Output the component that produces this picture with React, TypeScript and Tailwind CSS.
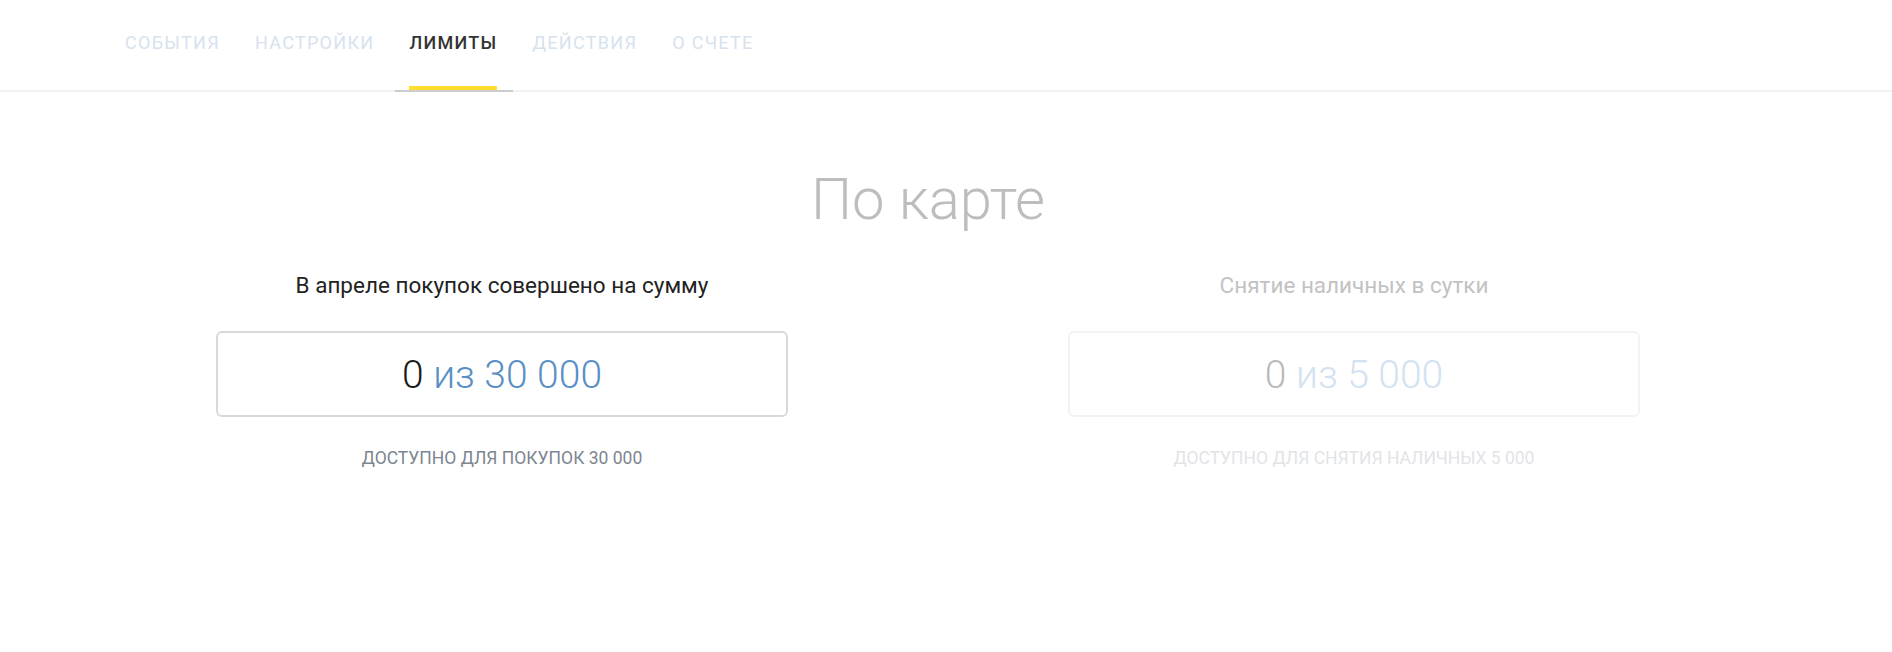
import React, { useState } from 'react';

const tabs = ['События', 'Настройки', 'Лимиты', 'Действия', 'О счете'];

type Limit = {
  title: string;
  spent: string;
  total: string;
  note: string;
  enabled: boolean;
};

const limits: Limit[] = [
  {
    title: 'В апреле покупок совершено на сумму',
    spent: '0',
    total: 'из 30 000',
    note: 'Доступно для покупок 30 000',
    enabled: true,
  },
  {
    title: 'Снятие наличных в сутки',
    spent: '0',
    total: 'из 5 000',
    note: 'Доступно для снятия наличных 5 000',
    enabled: false,
  },
];

const LimitCard = ({ limit }: { limit: Limit }) => (
  <div className="flex flex-col items-center w-[852px]">
    <h3
      className={`text-[22.5px] leading-6 ${
        limit.enabled ? 'text-[#222222]' : 'text-[#c2c2c2]'
      }`}
    >
      {limit.title}
    </h3>

    <div
      className={`mt-[34px] w-[572px] h-[86px] rounded-[6px] border-2 flex items-center justify-center pt-[2px] ${
        limit.enabled ? 'border-[#d9d9d9]' : 'border-[#f3f3f3]'
      }`}
    >
      <span className="text-[39px] leading-none font-light">
        <span className={limit.enabled ? 'text-[#1a1a1a]' : 'text-[#bababa]'}>
          {limit.spent}
        </span>{' '}
        <span className={limit.enabled ? 'text-[#5a8fc5]' : 'text-[#d2e2f1]'}>
          {limit.total}
        </span>
      </span>
    </div>

    <p
      className={`mt-[31px] text-[17.5px] leading-5 uppercase ${
        limit.enabled ? 'text-[#7d8591]' : 'text-[#e2e4e8]'
      }`}
    >
      {limit.note}
    </p>
  </div>
);

const App = () => {
  const [activeTab, setActiveTab] = useState('Лимиты');

  return (
    <div className="min-h-[652px] bg-white font-['Roboto',sans-serif]">
      <nav className="h-[92px] border-b-2 border-[#f2f2f2] flex pl-[111px] gap-[5px]">
        {tabs.map((tab) => {
          const active = tab === activeTab;
          return (
            <button
              key={tab}
              onClick={() => setActiveTab(tab)}
              className={`pl-[14px] pr-[16px] -mb-[2px] border-b-2 ${
                active ? 'border-[#cccccc]' : 'border-transparent'
              }`}
            >
              <div
                className={`pt-[33px] pb-[33px] border-b-4 text-[18px] leading-5 uppercase tracking-[1.3px] ${
                  active
                    ? 'border-[#ffdd2d] text-[#333333] font-medium'
                    : 'border-transparent text-[#d6e2ee]'
                }`}
              >
                {tab}
              </div>
            </button>
          );
        })}
      </nav>

      <main className="ml-[76px] w-[1704px] flex flex-col items-center">
        <h1 className="mt-[78px] text-[58px] leading-none font-light text-[#bdbdbd]">
          По карте
        </h1>

        <div className="mt-[45px] flex">
          {limits.map((limit) => (
            <LimitCard key={limit.title} limit={limit} />
          ))}
        </div>
      </main>
    </div>
  );
};

export default App;
